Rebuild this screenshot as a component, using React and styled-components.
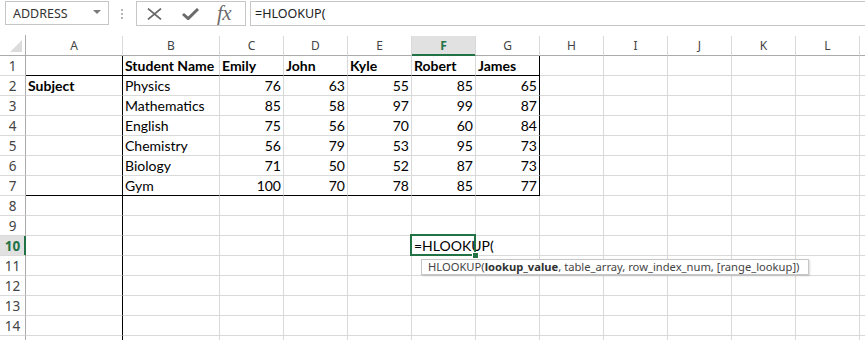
import React from "react";
import styled, { createGlobalStyle } from "styled-components";

const GREEN = "#217346";
const GRID = "#d9d9d9";
const HEAD_LINE = "#ababab";

const Global = createGlobalStyle`
  html, body { margin: 0; padding: 0; background: #fff; overflow: hidden; }
  * { box-sizing: border-box; }
`;

const Page = styled.div`
  width: 865px;
  height: 340px;
  overflow: hidden;
  background: #fff;
`;

const TopBar = styled.div`
  display: flex;
  align-items: flex-start;
  height: 35px;
  padding-top: 1px;
  font-family: "Noto Sans", "Open Sans", sans-serif;
  color: #444;
`;

const NameBox = styled.div`
  margin-left: 5px;
  width: 104px;
  height: 24px;
  border: 1px solid #c6c6c6;
  display: flex;
  align-items: center;
  justify-content: space-between;
  padding: 0 7px 0 7px;
  font-size: 12.5px;
  color: #333;
`;

const DropArrow = styled.span`
  width: 0;
  height: 0;
  border-left: 4px solid transparent;
  border-right: 4px solid transparent;
  border-top: 4px solid #7a7a7a;
  margin-top: -2px;
`;

const Grip = styled.div`
  margin: 8px 13px 0 12px;
  display: flex;
  flex-direction: column;
  gap: 2px;
  span {
    width: 2px;
    height: 2px;
    background: #b5b5b5;
  }
`;

const FxBox = styled.div`
  width: 110px;
  height: 25px;
  border: 1px solid #c6c6c6;
  display: flex;
  align-items: center;
  padding-left: 10px;
`;

const IconSlot = styled.div`
  margin-left: ${(p) => p.$gap || 0}px;
  display: flex;
  align-items: center;
`;

const FxText = styled.span`
  font-family: "Liberation Serif", "DejaVu Serif", serif;
  font-style: italic;
  font-size: 21px;
  color: #6b6b6b;
  line-height: 1;
  letter-spacing: -0.5px;
`;

const FormulaBox = styled.div`
  margin-left: 4px;
  flex: 1;
  height: 25px;
  border: 1px solid #c6c6c6;
  border-right: none;
  display: flex;
  align-items: center;
  padding-left: 4px;
  font-size: 12.5px;
  color: #222;
`;

const Sheet = styled.div`
  display: grid;
  grid-template-columns: 26px 97px 97px repeat(10, 64px) 64px;
  grid-template-rows: 21px;
  grid-auto-rows: 20px;
  width: max-content;
`;

const Corner = styled.div`
  border-right: 1px solid ${HEAD_LINE};
  border-bottom: 1px solid ${HEAD_LINE};
  display: flex;
  align-items: flex-end;
  justify-content: flex-end;
  padding: 0 3px 3px 0;
`;

const ColHeader = styled.div`
  border-right: 1px solid ${GRID};
  border-bottom: 1px solid ${(p) => (p.$active ? GREEN : HEAD_LINE)};
  box-shadow: ${(p) => (p.$active ? `inset 0 -1px 0 ${GREEN}` : "none")};
  background: ${(p) => (p.$active ? "#e1e1e1" : "#fff")};
  margin-top: 1px;
  display: flex;
  align-items: center;
  justify-content: center;
  font-family: "Noto Sans", "Open Sans", sans-serif;
  font-size: 12px;
  font-weight: ${(p) => (p.$active ? 700 : 400)};
  color: ${(p) => (p.$active ? GREEN : "#444")};
`;

const RowHeader = styled.div`
  border-right: 1px solid ${(p) => (p.$active ? GREEN : HEAD_LINE)};
  border-bottom: 1px solid ${GRID};
  box-shadow: ${(p) => (p.$active ? `inset -1px 0 0 ${GREEN}` : "none")};
  background: ${(p) => (p.$active ? "#e1e1e1" : "#fff")};
  display: flex;
  align-items: center;
  justify-content: center;
  padding-top: 1px;
  font-family: "Noto Sans", "Open Sans", sans-serif;
  font-size: 13.5px;
  font-weight: ${(p) => (p.$active ? 700 : 400)};
  color: ${(p) => (p.$active ? GREEN : "#444")};
`;

const Cell = styled.div`
  position: relative;
  border-right: 1px solid ${(p) => (p.$blackRight ? "#000" : GRID)};
  border-bottom: 1px solid ${(p) => (p.$blackBottom ? "#000" : GRID)};
  display: flex;
  align-items: flex-end;
  justify-content: ${(p) => (p.$num ? "flex-end" : "flex-start")};
  padding: 0 2px 1px 2px;
  font-family: "Lato", "Liberation Sans", sans-serif;
  font-size: 14px;
  line-height: 17px;
  font-weight: ${(p) => (p.$bold ? 700 : 400)};
  color: #000;
  white-space: nowrap;
  z-index: ${(p) => (p.$active ? 2 : "auto")};
`;

const ActiveFrame = styled.div`
  position: absolute;
  left: -2px;
  top: -2px;
  right: -1px;
  bottom: -1px;
  border: 2px solid ${GREEN};
  pointer-events: none;
`;

const FillHandle = styled.div`
  position: absolute;
  right: -4px;
  bottom: -4px;
  width: 7px;
  height: 7px;
  background: ${GREEN};
  border: 1px solid #fff;
`;

const Tooltip = styled.div`
  position: absolute;
  left: 9px;
  top: 23px;
  width: 388px;
  height: 16px;
  border: 1px solid #c6c6c6;
  background: #fff;
  box-shadow: 1px 1px 2px rgba(0, 0, 0, 0.15);
  display: flex;
  align-items: center;
  padding-left: 6px;
  font-family: "Noto Sans", "Open Sans", sans-serif;
  font-size: 11.2px;
  line-height: 14px;
  color: #444;
  z-index: 3;
  b {
    font-weight: 700;
    color: #333;
  }
`;

const COLS = ["A", "B", "C", "D", "E", "F", "G", "H", "I", "J", "K", "L", "M"];
const SHOWN_COLS = 12;
const SHOWN_ROWS = 14;

const DATA = {
  1: ["", "Student Name", "Emily", "John", "Kyle", "Robert", "James"],
  2: ["Subject", "Physics", 76, 63, 55, 85, 65],
  3: ["", "Mathematics", 85, 58, 97, 99, 87],
  4: ["", "English", 75, 56, 70, 60, 84],
  5: ["", "Chemistry", 56, 79, 53, 95, 73],
  6: ["", "Biology", 71, 50, 52, 87, 73],
  7: ["", "Gym", 100, 70, 78, 85, 77],
};

function XIcon() {
  return (
    <svg width="15" height="12" viewBox="0 0 15 12">
      <path d="M1 0.6 L14 11.4 M14 0.6 L1 11.4" stroke="#666" strokeWidth="1.7" fill="none" />
    </svg>
  );
}

function CheckIcon() {
  return (
    <svg width="17" height="12" viewBox="0 0 17 12">
      <path d="M1 6 L6.2 10.6 L16 1" stroke="#6b6b6b" strokeWidth="3" fill="none" strokeLinejoin="miter" />
    </svg>
  );
}

function CornerTriangle() {
  return (
    <svg width="12" height="12" viewBox="0 0 12 12">
      <path d="M12 0 L12 12 L0 12 Z" fill="#dcdcdc" />
    </svg>
  );
}

export default function App() {
  const rows = [];
  for (let r = 1; r <= 15; r++) rows.push(r);

  return (
    <Page>
      <Global />
      <TopBar>
        <NameBox>
          <span>ADDRESS</span>
          <DropArrow />
        </NameBox>
        <Grip>
          <span />
          <span />
          <span />
        </Grip>
        <FxBox>
          <IconSlot>
            <XIcon />
          </IconSlot>
          <IconSlot $gap={20}>
            <CheckIcon />
          </IconSlot>
          <IconSlot $gap={18}>
            <FxText>fx</FxText>
          </IconSlot>
        </FxBox>
        <FormulaBox>=HLOOKUP(</FormulaBox>
      </TopBar>
      <Sheet>
        <Corner>
          <CornerTriangle />
        </Corner>
        {COLS.map((c, ci) => (
          <ColHeader key={c} $active={c === "F"}>
            {ci < SHOWN_COLS ? c : null}
          </ColHeader>
        ))}
        {rows.map((r) => (
          <React.Fragment key={r}>
            <RowHeader $active={r === 10}>{r <= SHOWN_ROWS ? r : null}</RowHeader>
            {COLS.map((c, ci) => {
              const rowData = DATA[r];
              const val = rowData ? rowData[ci] : undefined;
              const isNum = typeof val === "number";
              const bold = (r === 1 && ci >= 1 && ci <= 6) || (r === 2 && ci === 0);
              const blackRight = ci === 0 || (ci === 6 && r <= 7);
              const blackBottom = (r === 1 || r === 7) && ci <= 6;
              const active = r === 10 && c === "F";
              return (
                <Cell
                  key={c}
                  $num={isNum}
                  $bold={bold}
                  $blackRight={blackRight}
                  $blackBottom={blackBottom}
                  $active={active}
                >
                  {val !== undefined && val !== "" ? val : null}
                  {active && (
                    <>
                      =HLOOKUP(
                      <ActiveFrame />
                      <FillHandle />
                      <Tooltip>
                        HLOOKUP(<b>lookup_value</b>, table_array, row_index_num, [range_lookup])
                      </Tooltip>
                    </>
                  )}
                </Cell>
              );
            })}
          </React.Fragment>
        ))}
      </Sheet>
    </Page>
  );
}
